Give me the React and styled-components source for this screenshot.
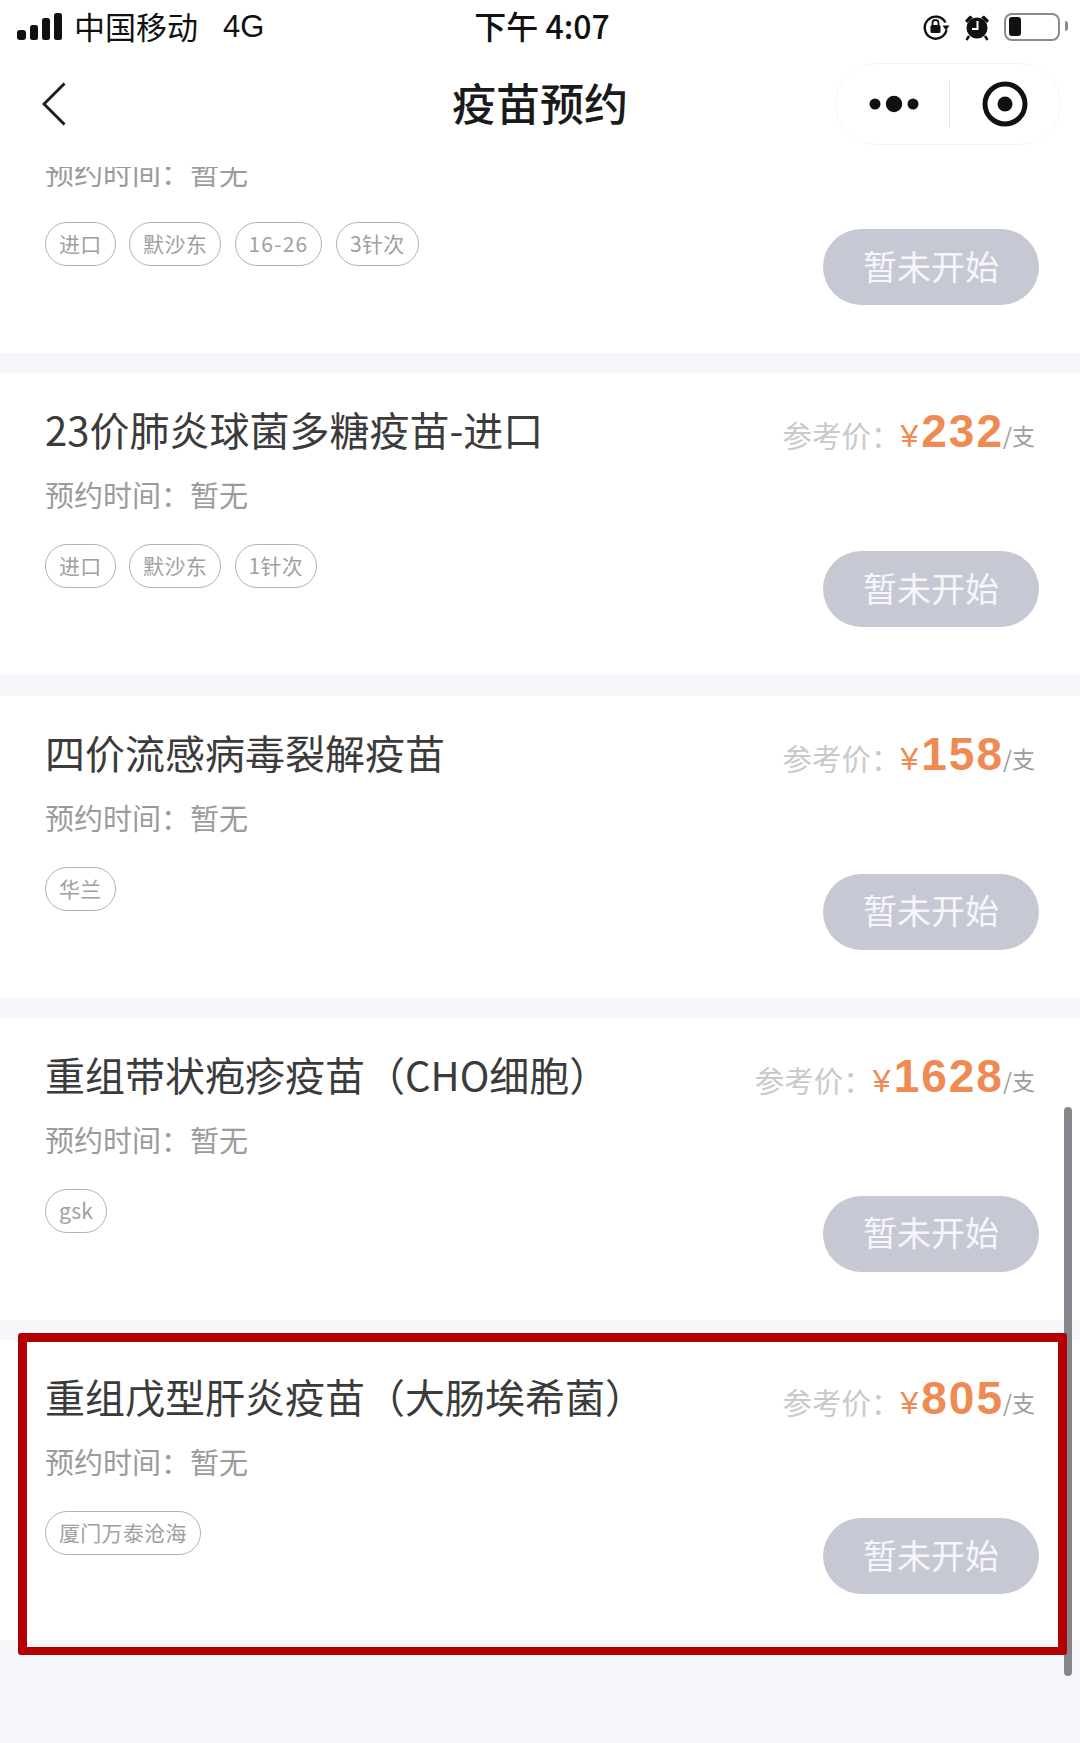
import React from 'react';
import styled, { createGlobalStyle } from 'styled-components';

// the first entry is scrolled under the nav bar, only its lower part shows
const vaccines = [
    { id: 'first', tags: ['进口', '默沙东', '16-26', '3针次'] },
    { id: 'pneumo', name: '23价肺炎球菌多糖疫苗-进口', price: '232', tags: ['进口', '默沙东', '1针次'] },
    { id: 'flu', name: '四价流感病毒裂解疫苗', price: '158', tags: ['华兰'] },
    { id: 'zoster', name: '重组带状疱疹疫苗（CHO细胞）', price: '1628', tags: ['gsk'] },
    { id: 'hepe', name: '重组戊型肝炎疫苗（大肠埃希菌）', price: '805', tags: ['厦门万泰沧海'], marked: true },
];

const GlobalStyle = createGlobalStyle`
    html, body {
        margin: 0;
        padding: 0;
        background: #f6f7fb;
    }
    * {
        box-sizing: border-box;
    }
`;

function SignalIcon() {
    return (
        <svg width="46" height="28" viewBox="0 0 46 28">
            <rect x="0" y="17" width="9" height="10" rx="3" fill="#111" />
            <rect x="13" y="12" width="8" height="15" rx="2.5" fill="#111" />
            <rect x="25" y="5" width="8" height="22" rx="2.5" fill="#111" />
            <rect x="37" y="0" width="8" height="27" rx="2.5" fill="#111" />
        </svg>
    );
}

function RotationLockIcon() {
    return (
        <svg width="28" height="28" viewBox="0 0 28 28">
            <path d="M23.5 9.5A11 11 0 1 0 24.5 17" fill="none" stroke="#111" strokeWidth="2.4" />
            <path d="M20.5 12.5h7l-3.5 5z" fill="#111" />
            <rect x="8.5" y="12" width="10" height="8" rx="1.5" fill="#111" />
            <path d="M10.5 12V10a3 3 0 0 1 6 0v2" fill="none" stroke="#111" strokeWidth="1.8" />
        </svg>
    );
}

function AlarmIcon() {
    return (
        <svg width="26" height="28" viewBox="0 0 26 28">
            <circle cx="13" cy="15" r="10.5" fill="#111" />
            <path d="M1 7.5 6 2.5 9 4.5 3 10zM25 7.5 20 2.5 17 4.5 23 10z" fill="#111" />
            <path d="M5 23 2.5 27M21 23l2.5 4" stroke="#111" strokeWidth="2.4" />
            <path d="M13.5 8v8H8" fill="none" stroke="#fff" strokeWidth="2" />
        </svg>
    );
}

function BackIcon() {
    return (
        <svg width="24" height="44" viewBox="0 0 24 44">
            <path d="M22.5 1.5 2 22l20.5 20.5" fill="none" stroke="#1d1d1d" strokeWidth="3" />
        </svg>
    );
}

function MoreIcon() {
    return (
        <svg width="50" height="18" viewBox="0 0 50 18">
            <circle cx="6" cy="9" r="5.5" fill="#111" />
            <circle cx="25" cy="9" r="8.2" fill="#111" />
            <circle cx="44" cy="9" r="5.5" fill="#111" />
        </svg>
    );
}

function RecordIcon() {
    return (
        <svg width="46" height="46" viewBox="0 0 46 46">
            <circle cx="23" cy="23" r="20" fill="none" stroke="#111" strokeWidth="5" />
            <circle cx="23" cy="23" r="7.5" fill="#111" />
        </svg>
    );
}

function VaccineCard({ item }) {
    return (
        <Card>
            <CardHead>
                {item.name && <CardTitle>{item.name}</CardTitle>}
                {item.price && (
                    <Price>
                        <PriceLabel>参考价：</PriceLabel>
                        <Currency>¥</Currency>
                        <Amount>{item.price}</Amount>
                        <Unit>/支</Unit>
                    </Price>
                )}
            </CardHead>
            <CardBody>
                <div>
                    <BookingTime>预约时间：暂无</BookingTime>
                    <TagRow>
                        {item.tags.map((tag) => (
                            <Tag key={tag} numeric={/^[\d-]+$/.test(tag)}>{tag}</Tag>
                        ))}
                    </TagRow>
                </div>
                <BookButton>暂未开始</BookButton>
            </CardBody>
            {item.marked && <Marker />}
        </Card>
    );
}

function App() {
    return (
        <Screen>
            <GlobalStyle />
            <Header>
                <StatusBar>
                    <Carrier>
                        <SignalIcon />
                        <CarrierName>中国移动</CarrierName>
                        <NetworkType>4G</NetworkType>
                    </Carrier>
                    <Clock>下午 4:07</Clock>
                    <StatusIcons>
                        <RotationLockIcon />
                        <AlarmIcon />
                        <Battery />
                    </StatusIcons>
                </StatusBar>
                <NavBar>
                    <BackLink>
                        <BackIcon />
                    </BackLink>
                    <NavTitle>疫苗预约</NavTitle>
                    <Capsule>
                        <CapsuleSlot>
                            <MoreIcon />
                        </CapsuleSlot>
                        <CapsuleSlot divided>
                            <RecordIcon />
                        </CapsuleSlot>
                    </Capsule>
                </NavBar>
            </Header>
            <ScrollArea>
                <CardList>
                    {vaccines.map((item) => (
                        <VaccineCard key={item.id} item={item} />
                    ))}
                </CardList>
            </ScrollArea>
            <ScrollThumb />
        </Screen>
    );
}

const Screen = styled.div`
    position: relative;
    display: flex;
    flex-direction: column;
    width: 1080px;
    height: 1743px;
    overflow: hidden;
    background: #f6f7fb;
    font-family: "Noto Sans CJK SC", "Liberation Sans", sans-serif;
`;

const Header = styled.header`
    flex: none;
    height: 167px;
    background: #fff;
`;

const StatusBar = styled.div`
    display: grid;
    grid-template-columns: 1fr auto 1fr;
    align-items: center;
    height: 54px;
    padding: 0 13px 0 17px;
    color: #111;
`;

const Carrier = styled.div`
    display: flex;
    align-items: center;
`;

const CarrierName = styled.span`
    margin-left: 11px;
    padding-bottom: 4px;
    font-size: 31px;
`;

const NetworkType = styled.span`
    margin-left: 25px;
    padding-bottom: 1px;
    font-family: "Liberation Sans", sans-serif;
    font-size: 31px;
`;

const Clock = styled.div`
    padding-bottom: 4px;
    font-size: 32px;
    font-weight: 500;
`;

const StatusIcons = styled.div`
    display: flex;
    justify-content: flex-end;
    align-items: center;
    gap: 14px;
`;

const Battery = styled.div`
    position: relative;
    width: 56px;
    height: 28px;
    margin-right: 7px;
    border: 2.5px solid #8b8b8b;
    border-radius: 8px;
    &::before {
        content: '';
        position: absolute;
        left: 3px;
        top: 2px;
        width: 12px;
        height: 19px;
        border-radius: 3px;
        background: #111;
    }
    &::after {
        content: '';
        position: absolute;
        right: -10px;
        top: 6px;
        width: 3px;
        height: 10px;
        border-radius: 0 3px 3px 0;
        background: #8b8b8b;
    }
`;

const NavBar = styled.nav`
    display: grid;
    grid-template-columns: 1fr auto 1fr;
    align-items: center;
    height: 82px;
    margin-top: 9px;
    padding: 0 19px;
`;

const BackLink = styled.div`
    display: flex;
    align-items: center;
    padding-left: 23px;
`;

const NavTitle = styled.h1`
    margin: 0 0 4px;
    color: #1a1a1a;
    font-size: 44px;
    font-weight: 500;
    line-height: 60px;
`;

const Capsule = styled.div`
    display: flex;
    justify-self: end;
    align-items: center;
    width: 226px;
    height: 82px;
    border: 1px solid #f5f5f5;
    border-radius: 41px;
`;

const CapsuleSlot = styled.div`
    display: flex;
    justify-content: center;
    align-items: center;
    height: 47px;
    width: ${(props) => (props.divided ? '112px' : '113px')};
    padding-left: ${(props) => (props.divided ? '0' : '4px')};
    border-left: ${(props) => (props.divided ? '1px solid #e6e6e6' : 'none')};
`;

const ScrollArea = styled.main`
    flex: 1;
    overflow: hidden;
`;

const CardList = styled.div`
    display: flex;
    flex-direction: column;
    gap: 20.33px;
    margin-top: -116px;
`;

const Card = styled.section`
    position: relative;
    height: 302px;
    padding: 31px 41px 0 45px;
    background: #fff;
    &:last-child {
        height: 300px;
    }
`;

const CardHead = styled.div`
    display: flex;
    justify-content: space-between;
    align-items: flex-start;
    height: 54px;
    padding-right: 4px;
`;

const CardTitle = styled.h2`
    margin: 0;
    color: #3b3b3b;
    font-size: 40px;
    font-weight: 400;
    line-height: 50px;
    white-space: nowrap;
`;

const Price = styled.div`
    display: flex;
    align-items: baseline;
    line-height: 54px;
`;

const PriceLabel = styled.span`
    color: #c9c9c9;
    font-size: 29.5px;
`;

const Currency = styled.span`
    margin-right: 3px;
    color: #ef8a52;
    font-family: "Liberation Sans", sans-serif;
    font-size: 32px;
`;

const Amount = styled.span`
    color: #ef8a52;
    font-family: "Liberation Sans", sans-serif;
    font-size: 46px;
    font-weight: 700;
    letter-spacing: 2px;
`;

const Unit = styled.span`
    margin-left: -1px;
    color: #9c9c9c;
    font-size: 23px;
    transform: translateY(-2px);
`;

const CardBody = styled.div`
    display: flex;
    justify-content: space-between;
    margin-top: 16px;
`;

const BookingTime = styled.div`
    color: #9b9b9b;
    font-size: 29px;
    line-height: 40px;
`;

const TagRow = styled.div`
    display: flex;
    gap: 13.5px;
    margin-top: 30px;
`;

const Tag = styled.span`
    display: flex;
    align-items: center;
    height: 44px;
    padding: 0 13px 2px;
    border: 1px solid #b4b4b4;
    border-radius: 22px;
    color: #a0a0a0;
    font-size: 21px;
    letter-spacing: ${(props) => (props.numeric ? '1.2px' : '0.3px')};
`;

const BookButton = styled.button`
    flex: none;
    width: 216px;
    height: 76px;
    margin-top: 77px;
    padding: 0 0 4px;
    border: none;
    border-radius: 38px;
    background: #c6c9d4;
    color: #f6f6f8;
    font-family: inherit;
    font-size: 34px;
`;

/* red frame laid over the last card */
const Marker = styled.div`
    position: absolute;
    z-index: 2;
    top: -7px;
    left: 18px;
    width: 1049px;
    height: 322px;
    border: solid #b30000;
    border-width: 9px 9px 8px 9px;
    border-radius: 3px;
`;

const ScrollThumb = styled.div`
    position: absolute;
    z-index: 1;
    top: 1107px;
    right: 8px;
    width: 8px;
    height: 569px;
    border-radius: 4px;
    background: #85868c;
`;

export default App;
